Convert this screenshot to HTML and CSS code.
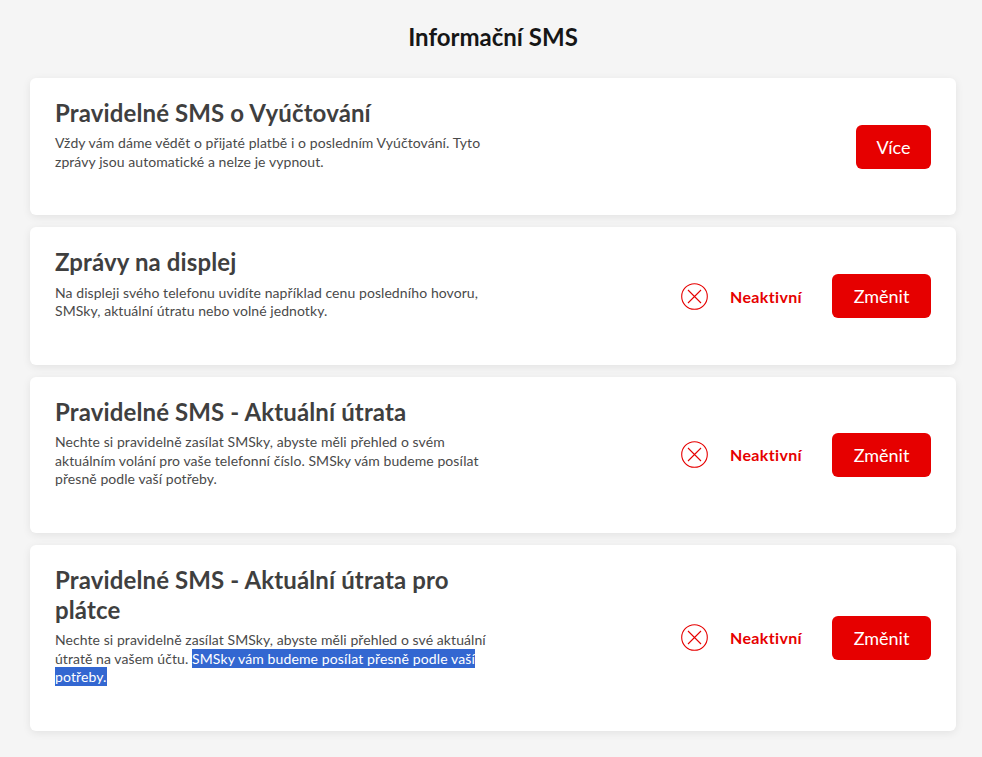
FILE: index.html
```html
<!DOCTYPE html>
<html lang="cs">
<head>
<meta charset="utf-8">
<title>Informační SMS</title>
<link rel="stylesheet" href="styles.css">
</head>
<body>
<main class="page">
  <h1 class="page-title">Informační SMS</h1>
  <section class="card">
    <div class="card-text">
      <h2 class="card-title">Pravidelné SMS o Vyúčtování</h2>
      <p class="card-desc">Vždy vám dáme vědět o přijaté platbě i o posledním Vyúčtování. Tyto zprávy jsou automatické a nelze je vypnout.</p>
    </div>
    <div class="card-actions"><button class="btn btn-narrow">Více</button></div>
  </section>
  <section class="card">
    <div class="card-text">
      <h2 class="card-title">Zprávy na displej</h2>
      <p class="card-desc">Na displeji svého telefonu uvidíte například cenu posledního hovoru, SMSky, aktuální útratu nebo volné jednotky.</p>
    </div>
    <div class="card-actions">
      <svg class="status-icon" viewBox="0 0 27 27"><circle cx="13.500" cy="13.500" r="12.800" /><path d="M7 7l13 13M20 7L7 20" /></svg>
      <span class="status">Neaktivní</span>
      <button class="btn">Změnit</button>
    </div>
  </section>
  <section class="card">
    <div class="card-text">
      <h2 class="card-title">Pravidelné SMS - Aktuální útrata</h2>
      <p class="card-desc">Nechte si pravidelně zasílat SMSky, abyste měli přehled o svém aktuálním volání pro vaše telefonní číslo. SMSky vám budeme posílat přesně podle vaší potřeby.</p>
    </div>
    <div class="card-actions">
      <svg class="status-icon" viewBox="0 0 27 27"><circle cx="13.500" cy="13.500" r="12.800" /><path d="M7 7l13 13M20 7L7 20" /></svg>
      <span class="status">Neaktivní</span>
      <button class="btn">Změnit</button>
    </div>
  </section>
  <section class="card">
    <div class="card-text">
      <h2 class="card-title">Pravidelné SMS - Aktuální útrata pro plátce</h2>
      <p class="card-desc">Nechte si pravidelně zasílat SMSky, abyste měli přehled o své aktuální útratě na vašem účtu. <span class="selected">SMSky vám budeme posílat přesně podle vaší potřeby.</span></p>
    </div>
    <div class="card-actions">
      <svg class="status-icon" viewBox="0 0 27 27"><circle cx="13.500" cy="13.500" r="12.800" /><path d="M7 7l13 13M20 7L7 20" /></svg>
      <span class="status">Neaktivní</span>
      <button class="btn">Změnit</button>
    </div>
  </section>
</main>
</body>
</html>
```

FILE: styles.css
```css
* { box-sizing: border-box; }
html, body { margin: 0; height: 100%; }
body {
  background: #f5f5f5;
  font-family: Lato, "Liberation Sans", sans-serif;
  overflow: hidden;
}
.page { padding: 19px 26px 0 30px; }
.page-title {
  margin: 0 0 24px;
  font-size: 24px;
  line-height: 35px;
  font-weight: 700;
  color: #161616;
  text-align: center;
}
.card {
  display: flex;
  align-items: center;
  justify-content: space-between;
  margin-bottom: 12px;
  padding: 0 25px;
  background: #fff;
  border-radius: 6px;
  box-shadow: 0 2px 8px rgba(0, 0, 0, 0.08);
}
.card-text { width: 432px; padding: 20px 0 44.300px; }
.card-title {
  margin: 0 0 6px;
  font-size: 24px;
  line-height: 30.300px;
  font-weight: 700;
  letter-spacing: 0.12px;
  color: #3f3f3f;
}
.card-desc {
  margin: 0;
  font-size: 14px;
  line-height: 18.400px;
  letter-spacing: 0.07px;
  color: #4a4a4a;
}
.selected { padding: 1px 0; background: #3367d1; color: #fff; letter-spacing: 0.12px; }
.card-actions { display: flex; align-items: center; }
.status-icon { width: 27px; height: 27px; fill: none; stroke: #e60000; stroke-width: 1.100; }
.status {
  margin: 0 30px 0 22px;
  font-size: 16px;
  font-weight: 700;
  letter-spacing: 0.35px;
  color: #e60000;
}
.btn {
  width: 99px;
  height: 44px;
  border: 0;
  border-radius: 6px;
  background: #e60000;
  color: #fff;
  font: 18px Lato, "Liberation Sans", sans-serif;
}
.btn-narrow { width: 75px; }
```
